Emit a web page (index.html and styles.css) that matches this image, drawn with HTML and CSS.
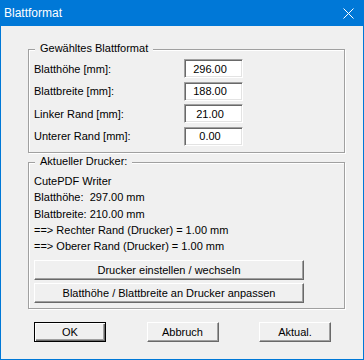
FILE: index.html
```html
<!DOCTYPE html>
<html lang="de">
<head>
  <meta charset="UTF-8" />
  <title>Blattformat</title>
  <link rel="stylesheet" href="styles.css">
</head>
<body>
  <div class="window">
    <div class="titlebar">
      <span class="title">Blattformat</span>
      <svg class="close" width="11" height="11" viewBox="0 0 11 11">
        <path d="M0.5 0.5 L10.5 10.5 M10.5 0.5 L0.5 10.5" stroke="#fff" stroke-width="1" fill="none"/>
      </svg>
    </div>

    <div class="content">
      <div class="group group-format">
        <span class="group-title">Gewähltes Blattformat</span>
        <div class="field-row">
          <label class="field-label" for="hoehe">Blatthöhe [mm]:</label>
          <input class="field" id="hoehe" type="text" value="296.00">
        </div>
        <div class="field-row">
          <label class="field-label" for="breite">Blattbreite [mm]:</label>
          <input class="field" id="breite" type="text" value="188.00">
        </div>
        <div class="field-row">
          <label class="field-label" for="links">Linker Rand [mm]:</label>
          <input class="field" id="links" type="text" value="21.00">
        </div>
        <div class="field-row">
          <label class="field-label" for="unten">Unterer Rand [mm]:</label>
          <input class="field" id="unten" type="text" value="0.00">
        </div>
      </div>

      <div class="group group-printer">
        <span class="group-title">Aktueller Drucker:</span>
        <div class="printer-info">
          <div>CutePDF Writer</div>
          <div>Blatthöhe:&nbsp; 297.00 mm</div>
          <div>Blattbreite: 210.00 mm</div>
          <div>==&gt; Rechter Rand (Drucker) = 1.00 mm</div>
          <div>==&gt; Oberer Rand (Drucker) = 1.00 mm</div>
        </div>
        <button class="btn btn-wide">Drucker einstellen / wechseln</button>
        <button class="btn btn-wide">Blatthöhe / Blattbreite an Drucker anpassen</button>
      </div>

      <div class="dialog-buttons">
        <button class="btn btn-small btn-default">OK</button>
        <button class="btn btn-small">Abbruch</button>
        <button class="btn btn-small">Aktual.</button>
      </div>
    </div>
  </div>
</body>
</html>
```

FILE: styles.css
```css
body {
  margin: 0;
  padding: 0;
  font-family: "Liberation Sans", Arial, sans-serif;
  font-size: 11px;
  color: #000;
}

.window {
  width: 364px;
  height: 360px;
  box-sizing: border-box;
  border: 1px solid #0078d7;
  border-top: none;
  background: #f0f0f0;
  display: flex;
  flex-direction: column;
}

.titlebar {
  height: 26px;
  margin: 0 -1px;
  padding: 0 10px 0 4px;
  background: #0078d7;
  color: #fff;
  font-size: 12px;
  display: flex;
  align-items: center;
  justify-content: space-between;
}

.close {
  display: block;
  margin-top: 1px;
}

.content {
  padding: 23px 0 0 27px;
}

.group {
  position: relative;
  width: 317px;
  box-sizing: border-box;
  border: 1px solid #a0a0a0;
  box-shadow: inset 1px 1px 0 #fff, 1px 1px 0 #fff;
}

.group-title {
  position: absolute;
  top: -8px;
  left: 6px;
  padding: 0 5px;
  line-height: 13px;
  background: #f0f0f0;
}

.group-format {
  height: 104px;
  padding: 9px 0 0 5px;
  display: flex;
  flex-direction: column;
  gap: 3.5px;
}

.field-row {
  display: flex;
  align-items: center;
  height: 19px;
}

.field-label {
  width: 150px;
}

.field {
  width: 59px;
  height: 19px;
  box-sizing: border-box;
  margin: 0;
  padding: 0 7px 0 0;
  border: 1px solid;
  border-color: #a0a0a0 #fff #fff #a0a0a0;
  box-shadow: inset 1px 1px 0 #696969, inset -1px -1px 0 #e3e3e3;
  background: #fff;
  font-family: inherit;
  font-size: 11px;
  text-align: center;
  color: #000;
  outline: none;
}

.group-printer {
  margin-top: 9px;
  height: 147px;
  padding: 10px 0 0 5px;
}

.printer-info {
  height: 82px;
  margin-bottom: 5px;
  line-height: 16.25px;
}

.btn {
  display: block;
  height: 20px;
  box-sizing: border-box;
  margin: 0;
  padding: 0;
  border: 1px solid;
  border-color: #fff #696969 #696969 #fff;
  box-shadow: inset -1px -1px 0 #a0a0a0;
  background: #f0f0f0;
  font-family: inherit;
  font-size: 11px;
  color: #000;
  text-align: center;
}

.btn-wide {
  width: 270px;
  margin-bottom: 3px;
}

.dialog-buttons {
  width: 297px;
  margin: 13px 0 0 6px;
  display: flex;
  justify-content: space-between;
}

.btn-small {
  width: 72px;
}

.btn-default {
  border-color: #000;
  box-shadow: inset 1px 1px 0 #fff, inset -1px -1px 0 #696969, inset -2px -2px 0 #a0a0a0;
}
```
